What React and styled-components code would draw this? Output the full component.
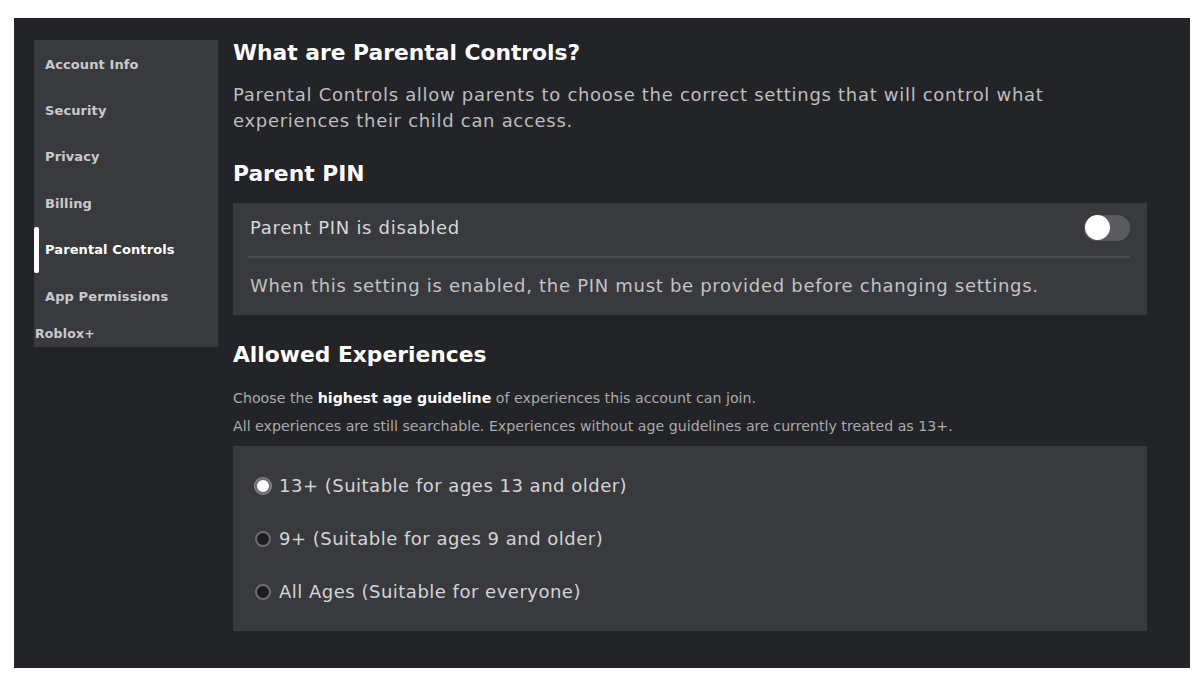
import React from 'react';
import styled, { createGlobalStyle } from 'styled-components';

const GlobalStyle = createGlobalStyle`
  html, body {
    margin: 0;
    padding: 0;
    background: #ffffff;
  }
  body {
    font-family: "DejaVu Sans", "Liberation Sans", sans-serif;
  }
`;

const Frame = styled.div`
  width: 1200px;
  height: 675px;
  padding: 18px 10px 7px 14px;
  box-sizing: border-box;
`;

const Panel = styled.div`
  display: flex;
  align-items: flex-start;
  gap: 15px;
  height: 100%;
  padding: 22px 43px 0 20px;
  box-sizing: border-box;
  background: #232427;
`;

const Sidebar = styled.nav`
  width: 184px;
  flex-shrink: 0;
  padding-top: 1px;
  background: #393a3d;
  display: flex;
  flex-direction: column;
`;

const NavItem = styled.div`
  position: relative;
  height: 46.4px;
  display: flex;
  align-items: center;
  padding-left: 11px;
  font-size: 13px;
  font-weight: 700;
  letter-spacing: 0.1px;
  color: ${(p) => (p.$active ? '#ffffff' : '#c9cacb')};

  ${(p) =>
    p.$active &&
    `
    &::before {
      content: "";
      position: absolute;
      left: 0;
      top: 0;
      width: 5px;
      height: 100%;
      background: #ffffff;
      border-radius: 2px;
    }
  `}
`;

const ExtraItem = styled.div`
  height: 28px;
  display: flex;
  align-items: center;
  padding-left: 1px;
  font-size: 12.5px;
  font-weight: 700;
  letter-spacing: 0.2px;
  color: #c9cacb;
`;

const Main = styled.main`
  flex: 1;
  display: flex;
  flex-direction: column;
`;

const Heading = styled.h2`
  margin: ${(p) => p.$mt || 0}px 0 0;
  font-size: 21.8px;
  line-height: 26px;
  font-weight: 700;
  color: #ffffff;
`;

const bodyText = `
  font-size: 18px;
  letter-spacing: 0.7px;
`;

const Lead = styled.p`
  margin: 16px 0 0;
  max-width: 840px;
  ${bodyText}
  line-height: 26px;
  color: #bdbebf;
`;

const Card = styled.section`
  margin-top: ${(p) => p.$mt || 16}px;
  background: #393a3d;
  padding: ${(p) => p.$pad || '0 17px 0 15px'};
`;

const ToggleRow = styled.div`
  height: 53px;
  padding: 0 0 4px 2px;
  box-sizing: border-box;
  display: flex;
  align-items: center;
  justify-content: space-between;
  ${bodyText}
  color: #d6d7d8;
`;

const Divider = styled.hr`
  margin: 0;
  border: none;
  height: 2px;
  background: #4c4d50;
`;

const Note = styled.div`
  height: 57px;
  padding: 0 0 3px 2px;
  box-sizing: border-box;
  display: flex;
  align-items: center;
  ${bodyText}
  color: #c2c3c4;
`;

const Toggle = styled.div`
  width: 46px;
  height: 26px;
  border-radius: 13px;
  background: #5b5c5f;
  display: flex;
  align-items: center;
  padding: 0 1px;
  box-sizing: border-box;

  &::before {
    content: "";
    width: 25px;
    height: 25px;
    border-radius: 50%;
    background: #ffffff;
  }
`;

const Small = styled.p`
  margin: ${(p) => p.$mt}px 0 0;
  font-size: 14.2px;
  line-height: 18px;
  color: #a9aaab;

  b {
    color: #ffffff;
    font-weight: 700;
  }
`;

const RadioRow = styled.label`
  height: 53px;
  display: flex;
  align-items: center;
  gap: 8px;
  font-size: 18px;
  letter-spacing: 0.5px;
  color: #d3d4d5;
`;

const Radio = styled.span`
  width: 16px;
  height: 16px;
  box-sizing: border-box;
  border-radius: 50%;
  border: 2px solid #6d6e70;
  background: ${(p) => (p.$checked ? '#ffffff' : '#1d1e20')};
  box-shadow: ${(p) => (p.$checked ? '0 0 0 1px #8a8b8d' : 'none')};
  flex-shrink: 0;
`;

const navItems = [
  'Account Info',
  'Security',
  'Privacy',
  'Billing',
  'Parental Controls',
  'App Permissions',
];

const options = [
  { label: '13+ (Suitable for ages 13 and older)', checked: true },
  { label: '9+ (Suitable for ages 9 and older)', checked: false },
  { label: 'All Ages (Suitable for everyone)', checked: false },
];

export default function App() {
  return (
    <>
      <GlobalStyle />
      <Frame>
        <Panel>
          <Sidebar>
            {navItems.map((item) => (
              <NavItem key={item} $active={item === 'Parental Controls'}>
                {item}
              </NavItem>
            ))}
            <ExtraItem>Roblox+</ExtraItem>
          </Sidebar>

          <Main>
            <Heading>What are Parental Controls?</Heading>
            <Lead>
              Parental Controls allow parents to choose the correct settings that will control what
              experiences their child can access.
            </Lead>

            <Heading $mt={27}>Parent PIN</Heading>
            <Card>
              <ToggleRow>
                Parent PIN is disabled
                <Toggle />
              </ToggleRow>
              <Divider />
              <Note>When this setting is enabled, the PIN must be provided before changing settings.</Note>
            </Card>

            <Heading $mt={27}>Allowed Experiences</Heading>
            <Small $mt={21}>
              Choose the <b>highest age guideline</b> of experiences this account can join.
            </Small>
            <Small $mt={10}>
              All experiences are still searchable. Experiences without age guidelines are currently treated as 13+.
            </Small>

            <Card $mt={11} $pad="13px 22px">
              {options.map((o) => (
                <RadioRow key={o.label}>
                  <Radio $checked={o.checked} />
                  {o.label}
                </RadioRow>
              ))}
            </Card>
          </Main>
        </Panel>
      </Frame>
    </>
  );
}
